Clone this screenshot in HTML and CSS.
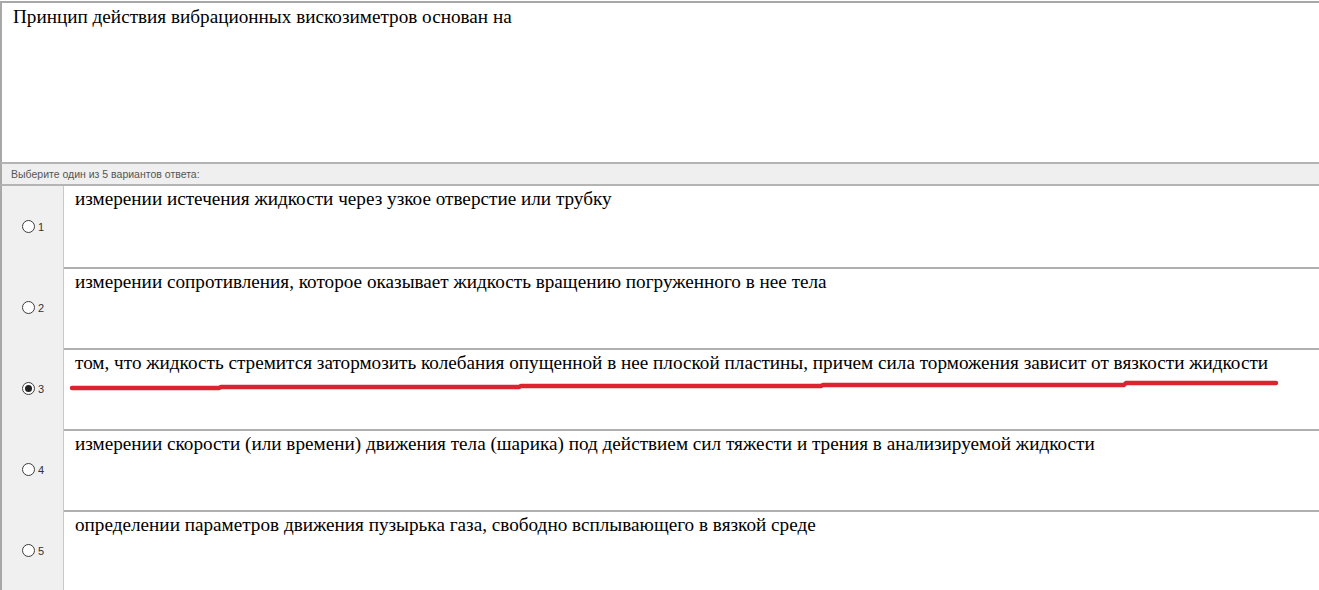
FILE: index.html
```html
<!DOCTYPE html>
<html lang="ru">
<head>
<meta charset="utf-8">
<title>Тест</title>
<link rel="stylesheet" href="styles.css">
</head>
<body>
<div class="test">
  <div class="question">Принцип действия вибрационных вискозиметров основан на</div>
  <div class="hint">Выберите один из 5 вариантов ответа:</div>
  <div class="answers">
    <div class="answer">
      <label class="mark"><span class="radio"></span><span class="num">1</span></label>
      <div class="text">измерении истечения жидкости через узкое отверстие или трубку</div>
    </div>
    <div class="answer">
      <label class="mark"><span class="radio"></span><span class="num">2</span></label>
      <div class="text">измерении сопротивления, которое оказывает жидкость вращению погруженного в нее тела</div>
    </div>
    <div class="answer">
      <label class="mark"><span class="radio checked"></span><span class="num">3</span></label>
      <div class="text">том, что жидкость стремится затормозить колебания опущенной в нее плоской пластины, причем сила торможения зависит от вязкости жидкости
        <svg class="underline" width="1230" height="14" viewBox="0 0 1230 14">
          <polyline points="8,10 155,10 157,9 455,9 457,8 757,8 759,7 1060,7 1062,5 1212,5" fill="none" stroke="#dc2430" stroke-width="4.5" stroke-linecap="round" stroke-linejoin="round"/>
        </svg>
      </div>
    </div>
    <div class="answer">
      <label class="mark"><span class="radio"></span><span class="num">4</span></label>
      <div class="text">измерении скорости (или времени) движения тела (шарика) под действием сил тяжести и трения в анализируемой жидкости</div>
    </div>
    <div class="answer">
      <label class="mark"><span class="radio"></span><span class="num">5</span></label>
      <div class="text">определении параметров движения пузырька газа, свободно всплывающего в вязкой среде</div>
    </div>
  </div>
</div>
</body>
</html>
```
FILE: styles.css
```css
html, body {
  margin: 0;
  padding: 0;
  background: #ffffff;
}

.test {
  width: 1319px;
  height: 590px;
  overflow: hidden;
  padding-top: 1px;
  box-sizing: border-box;
}

.question {
  height: 161px;
  border-top: 2px solid #a8a8a8;
  border-left: 2px solid #a8a8a8;
  padding: 3px 11px 0;
  box-sizing: border-box;
  font-family: "Liberation Serif", "DejaVu Serif", "Times New Roman", serif;
  font-size: 19.2px;
  line-height: 22px;
  color: #000;
}

.hint {
  height: 24px;
  border-top: 2px solid #b4b4b4;
  border-bottom: 2px solid #b4b4b4;
  border-left: 2px solid #a8a8a8;
  background: #efefef;
  box-sizing: border-box;
  padding: 4px 0 0 9px;
  font-family: "Liberation Sans", Tahoma, sans-serif;
  font-size: 10.5px;
  line-height: 12px;
  color: #555;
}

.answers {
  border-left: 2px solid #a8a8a8;
}

.answer {
  display: flex;
  height: 81px;
}

.mark {
  width: 62px;
  flex: none;
  background: #f0f0f0;
  border-right: 1px solid #c8c8c8;
  display: flex;
  align-items: center;
  justify-content: flex-start;
  padding: 0 0 0 20px;
  box-sizing: border-box;
}

.radio {
  width: 11px;
  height: 11px;
  border: 1px solid #3c3c3c;
  border-radius: 50%;
  background: #fff;
  position: relative;
  flex: none;
}

.radio.checked::after {
  content: "";
  position: absolute;
  left: 2px;
  top: 2px;
  width: 7px;
  height: 7px;
  border-radius: 50%;
  background: #222;
}

.num {
  margin-left: 3px;
  font-family: "Liberation Sans", Tahoma, sans-serif;
  font-size: 11px;
  color: #333;
}

.text {
  flex: 1;
  position: relative;
  background: #fff;
  padding: 2px 0 0 11px;
  font-family: "Liberation Serif", "DejaVu Serif", "Times New Roman", serif;
  font-size: 19.2px;
  line-height: 22px;
  color: #000;
}

.answer + .answer .text {
  border-top: 2px solid #b0b0b0;
}

.underline {
  position: absolute;
  left: 0;
  top: 28px;
}
```
